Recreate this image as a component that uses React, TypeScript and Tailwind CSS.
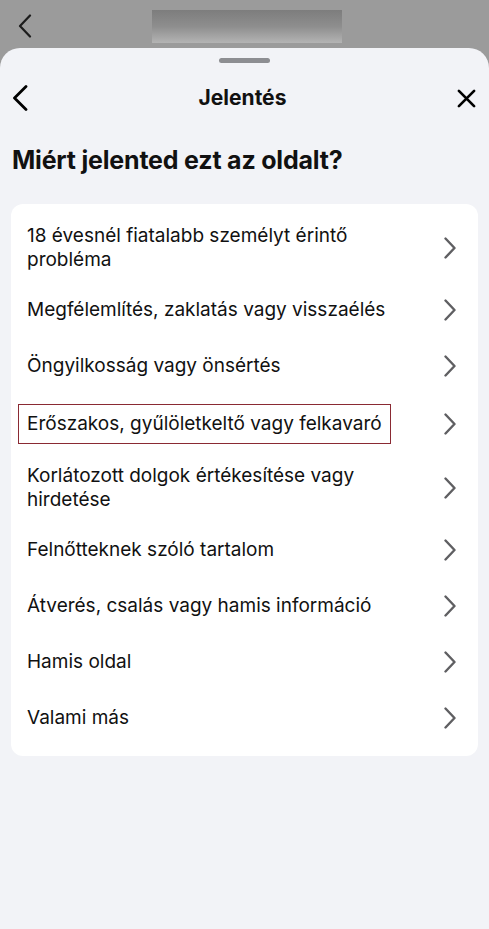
import React from 'react';

const items: { label: string; marked?: boolean }[] = [
  { label: '18 évesnél fiatalabb személyt érintő probléma' },
  { label: 'Megfélemlítés, zaklatás vagy visszaélés' },
  { label: 'Öngyilkosság vagy önsértés' },
  { label: 'Erőszakos, gyűlöletkeltő vagy felkavaró', marked: true },
  { label: 'Korlátozott dolgok értékesítése vagy hirdetése' },
  { label: 'Felnőtteknek szóló tartalom' },
  { label: 'Átverés, csalás vagy hamis információ' },
  { label: 'Hamis oldal' },
  { label: 'Valami más' },
];

const Chevron = ({ className = '' }: { className?: string }) => (
  <svg viewBox="0 0 12 22" className={className} fill="none" stroke="currentColor" strokeWidth={2.4} strokeLinecap="round" strokeLinejoin="round">
    <path d="M1.5 1.5 L10.5 11 L1.5 20.5" />
  </svg>
);

export default function App() {
  return (
    <div className="w-[489px] h-[929px] bg-[#9b9b9b] flex flex-col font-['Inter',sans-serif] overflow-hidden">
      {/* background page behind the sheet */}
      <div className="h-[48px] flex items-start shrink-0">
        <svg viewBox="0 0 14 24" className="w-[14px] h-[24px] ml-[18px] mt-[14px] text-[#1c1c1c]" fill="none" stroke="currentColor" strokeWidth={2.2} strokeLinecap="round" strokeLinejoin="round">
          <path d="M12 1.5 L2 12 L12 22.5" />
        </svg>
        <div className="ml-[120px] mt-[10px] w-[190px] h-[33px] bg-gradient-to-b from-[#7d7d7d] via-[#8e8e8e] to-[#b4b4b4]" />
      </div>

      {/* sheet */}
      <div className="flex-1 bg-[#f2f3f7] rounded-t-[20px] flex flex-col">
        <div className="flex justify-center pt-[10px]">
          <div className="w-[51px] h-[5px] rounded-full bg-[#8d8e92]" />
        </div>

        <div className="flex items-center justify-between h-[44px] mt-[13px] px-[12px]">
          <svg viewBox="0 0 16 26" className="w-[16px] h-[26px] text-black" fill="none" stroke="currentColor" strokeWidth={2.8} strokeLinecap="round" strokeLinejoin="round">
            <path d="M14 1.5 L2.5 13 L14 24.5" />
          </svg>
          <div className="text-[21px] font-bold text-[#111]">Jelentés</div>
          <svg viewBox="0 0 20 20" className="w-[19px] h-[19px] text-black mr-[1px]" fill="none" stroke="currentColor" strokeWidth={2.8} strokeLinecap="round">
            <path d="M2 2 L18 18 M18 2 L2 18" />
          </svg>
        </div>

        <h1 className="px-[12px] mt-[24px] text-[25px] leading-[32px] font-bold text-[#111] tracking-[-0.2px]">
          Miért jelented ezt az oldalt?
        </h1>

        <div className="mx-[11px] mt-[28px] bg-white rounded-[12px] py-[10px]">
          {items.map((item) => (
            <div key={item.label} className="min-h-[56px] flex items-center py-[10px] pl-[16px] pr-[22px] gap-[24px]">
              <div className="flex-1 text-[19px] leading-[24px] text-[#111]">
                {item.marked ? (
                  <span className="block w-fit -ml-[9px] px-[8px] py-[7px] border-[1.5px] border-[#8a2a33]">
                    {item.label}
                  </span>
                ) : (
                  item.label
                )}
              </div>
              <Chevron className="w-[12px] h-[22px] text-[#5f5f62] shrink-0" />
            </div>
          ))}
        </div>
      </div>
    </div>
  );
}
